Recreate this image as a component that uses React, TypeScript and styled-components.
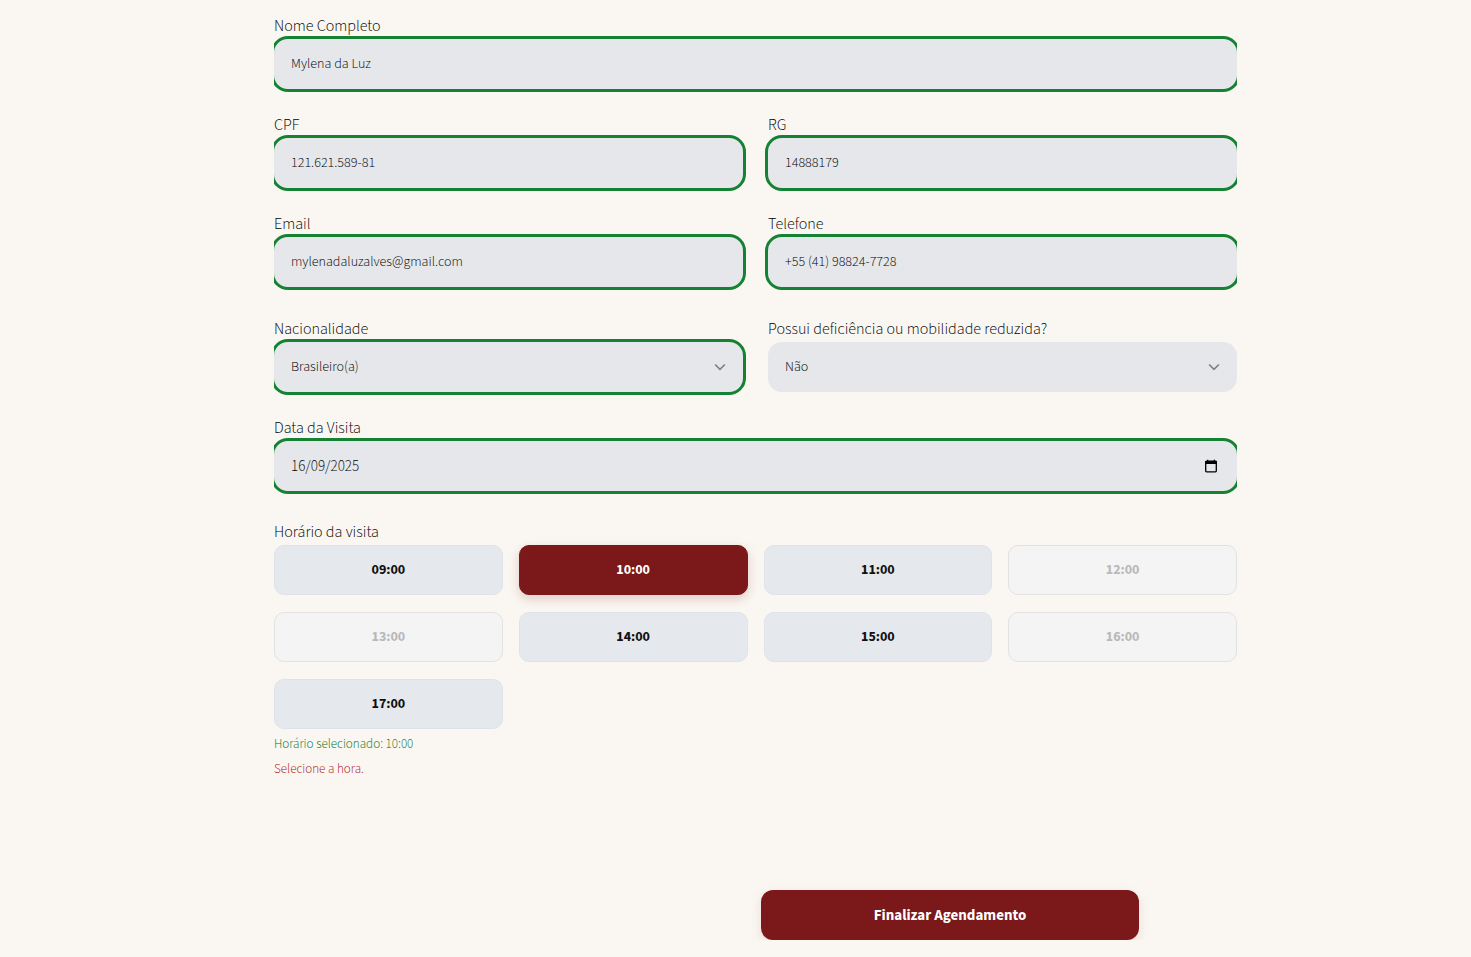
import React, { useState } from "react";
import styled, { createGlobalStyle, css } from "styled-components";

const colors = {
  page: "#faf7f2",
  field: "#e5e7eb",
  valid: "#158233",
  validText: "#00701c",
  errorText: "#b00d0d",
  wine: "#7b181a",
  text: "#000000",
};

const GlobalStyle = createGlobalStyle`
  *, *::before, *::after { box-sizing: border-box; }
  body {
    margin: 0;
    background: ${colors.page};
    color: ${colors.text};
    font-family: "Source Sans 3", "Noto Sans CJK JP", "Noto Sans", sans-serif;
    font-weight: 300;
  }
  button, input, select { font: inherit; color: inherit; }
`;

const Page = styled.main`
  padding: 0 234px 17px 274px;
`;

const Form = styled.form`
  display: flex;
  flex-direction: column;
  overflow: hidden;
  padding-top: 14px;
`;

const Section = styled.div<{ $columns?: number; $gap?: number }>`
  display: grid;
  grid-template-columns: repeat(${(p) => p.$columns ?? 1}, minmax(0, 1fr));
  column-gap: 25px;
  margin-bottom: ${(p) => p.$gap ?? 24}px;
`;

const Field = styled.div`
  display: flex;
  flex-direction: column;
`;

const labelText = css`
  font-size: 16px;
  line-height: 25px;
`;

const Label = styled.label`
  ${labelText}
`;

const controlStyle = css<{ $valid?: boolean }>`
  grid-area: 1 / 1;
  width: 100%;
  height: 50px;
  padding: 0 17px;
  border: 0;
  border-radius: 14px;
  background: ${colors.field};
  font-size: 14px;
  line-height: 20px;
  outline: ${(p) => (p.$valid ? `3px solid ${colors.valid}` : "none")};
`;

const ControlBox = styled.div`
  display: grid;
  align-items: center;
`;

const Input = styled.input<{ $valid?: boolean }>`
  ${controlStyle}
`;

const DateInput = styled(Input)`
  font-size: 15px;
`;

const Select = styled.select<{ $valid?: boolean }>`
  ${controlStyle}
  appearance: none;
`;

const Chevron = styled.svg`
  grid-area: 1 / 1;
  justify-self: end;
  margin-right: 15px;
  pointer-events: none;
`;

const CalendarButton = styled.button`
  grid-area: 1 / 1;
  justify-self: end;
  display: flex;
  margin-right: 19px;
  padding: 0;
  border: 0;
  background: none;
`;

const Schedule = styled.fieldset`
  min-width: 0;
  margin: 0;
  padding: 0;
  border: 0;
`;

const Legend = styled.legend`
  ${labelText}
  padding: 0;
`;

const Slots = styled.div`
  display: grid;
  grid-template-columns: repeat(4, minmax(0, 1fr));
  gap: 17px 16px;
  margin-bottom: 3px;
`;

const Slot = styled.button<{ $selected?: boolean }>`
  height: 50px;
  border: 1px solid #dfe2e8;
  border-radius: 10px;
  background: #e5e8ed;
  color: #111;
  font-size: 14px;
  font-weight: 700;

  &:disabled {
    border-color: #e2e2e2;
    background: #f4f4f4;
    color: #b9b9b9;
  }

  ${(p) =>
    p.$selected &&
    css`
      border-color: ${colors.wine};
      background: ${colors.wine};
      color: #fff;
      box-shadow: 0 4px 12px rgba(123, 24, 26, 0.2);
    `}
`;

const Message = styled.p<{ $error?: boolean }>`
  margin: 0;
  font-size: 13px;
  line-height: 25px;
  color: ${(p) => (p.$error ? colors.errorText : colors.validText)};
`;

const Footer = styled.div`
  display: flex;
  justify-content: flex-end;
  margin-top: 108px;
  padding-right: 98px;
`;

const Submit = styled.button`
  width: 378px;
  height: 50px;
  border: 0;
  border-radius: 12px;
  background: ${colors.wine};
  color: #fff;
  font-size: 15px;
  font-weight: 700;
  box-shadow: 0 4px 12px rgba(123, 24, 26, 0.12);
`;

type TextFieldProps = { id: string; label: string; value: string; type?: string };

function TextField({ id, label, value, type = "text" }: TextFieldProps) {
  return (
    <Field>
      <Label htmlFor={id}>{label}</Label>
      <Input id={id} type={type} defaultValue={value} $valid />
    </Field>
  );
}

type SelectFieldProps = { id: string; label: string; options: string[]; valid?: boolean };

function SelectField({ id, label, options, valid }: SelectFieldProps) {
  return (
    <Field>
      <Label htmlFor={id}>{label}</Label>
      <ControlBox>
        <Select id={id} $valid={valid}>
          {options.map((option) => (
            <option key={option}>{option}</option>
          ))}
        </Select>
        <Chevron width="16" height="16" viewBox="0 0 16 16" fill="none" stroke="#7f8083" strokeWidth="1.7" aria-hidden="true">
          <path d="M3.100 5.500 8 10.300 12.900 5.500" />
        </Chevron>
      </ControlBox>
    </Field>
  );
}

const hours = ["09:00", "10:00", "11:00", "12:00", "13:00", "14:00", "15:00", "16:00", "17:00"];
const unavailable = ["12:00", "13:00", "16:00"];

export default function App() {
  const [hour, setHour] = useState("10:00");

  return (
    <>
      <GlobalStyle />
      <Page>
        <Form onSubmit={(e) => e.preventDefault()}>
          <Section>
            <TextField id="nome" label="Nome Completo" value="Mylena da Luz" />
          </Section>
          <Section $columns={2}>
            <TextField id="cpf" label="CPF" value="121.621.589-81" />
            <TextField id="rg" label="RG" value="14888179" />
          </Section>
          <Section $columns={2} $gap={30}>
            <TextField id="email" label="Email" type="email" value="mylenadaluzalves@gmail.com" />
            <TextField id="telefone" label="Telefone" type="tel" value="+55 (41) 98824-7728" />
          </Section>
          <Section $columns={2}>
            <SelectField id="nacionalidade" label="Nacionalidade" options={["Brasileiro(a)"]} valid />
            <SelectField id="deficiencia" label="Possui deficiência ou mobilidade reduzida?" options={["Não", "Sim"]} />
          </Section>
          <Section $gap={29}>
            <Field>
              <Label htmlFor="data">Data da Visita</Label>
              <ControlBox>
                <DateInput id="data" type="text" defaultValue="16/09/2025" $valid />
                <CalendarButton type="button" aria-label="Abrir calendário">
                  <svg width="14" height="14" viewBox="0 0 14 14" aria-hidden="true">
                    <rect x="1.700" y="2.200" width="10.600" height="10.600" rx="0.800" fill="none" stroke="#000" strokeWidth="1.300" />
                    <path d="M1.200 2h11.600v3H1.200zM3 .7h1.300V2.500H3zM9.700.7H11V2.500H9.700z" fill="#000" />
                  </svg>
                </CalendarButton>
              </ControlBox>
            </Field>
          </Section>
          <Schedule>
            <Legend>Horário da visita</Legend>
            <Slots>
              {hours.map((h) => (
                <Slot
                  key={h}
                  type="button"
                  disabled={unavailable.includes(h)}
                  aria-pressed={h === hour}
                  $selected={h === hour}
                  onClick={() => setHour(h)}
                >
                  {h}
                </Slot>
              ))}
            </Slots>
            <Message>Horário selecionado: {hour}</Message>
            <Message $error>Selecione a hora.</Message>
          </Schedule>
          <Footer>
            <Submit type="submit">Finalizar Agendamento</Submit>
          </Footer>
        </Form>
      </Page>
    </>
  );
}
